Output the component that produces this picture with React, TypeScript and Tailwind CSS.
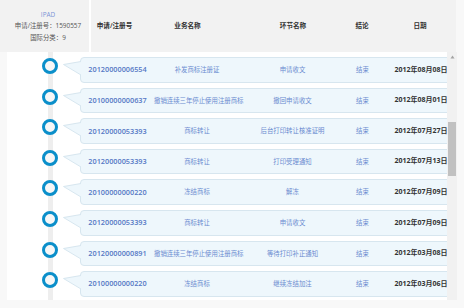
import React from "react";

const rows = [
  ["20120000006554", "补发商标注册证", "申请收文", "结束", "2012年08月08日"],
  ["20100000000637", "撤销连续三年停止使用注册商标", "撤回申请收文", "结束", "2012年08月01日"],
  ["20120000053393", "商标转让", "后台打印转让核准证明", "结束", "2012年07月27日"],
  ["20120000053393", "商标转让", "打印受理通知", "结束", "2012年07月13日"],
  ["20100000000220", "冻结商标", "解冻", "结束", "2012年07月09日"],
  ["20120000053393", "商标转让", "申请收文", "结束", "2012年07月09日"],
  ["20120000000891", "撤销连续三年停止使用注册商标", "等待打印补正通知", "结束", "2012年03月08日"],
  ["20100000000220", "冻结商标", "继续冻结加注", "结束", "2012年03月06日"],
];

const font = { fontFamily: "'Open Sans','Noto Sans CJK SC',sans-serif" };

function Circle() {
  return (
    <div className="w-[56px] shrink-0 pl-[35px] pt-[1px]">
      <div className="h-[16px] w-[16px] rounded-full border-[3px] border-[#0b8fca] bg-[#f7f7f7]" />
    </div>
  );
}

function Row({ r }: { r: string[] }) {
  return (
    <div className="flex h-[25.6px] shrink-0 items-start">
      <Circle />
      <svg width="18" height="26" viewBox="0 0 18 26" className="relative z-10 -mr-[1px] shrink-0">
        <polygon points="18,4.5 0.5,7.5 18,18" fill="#eef7fc" />
        <polyline points="18,4.5 0.5,7.5 18,18" fill="none" stroke="#d7e6ef" strokeWidth="1" />
      </svg>
      <div className="flex h-[25.6px] w-[392px] shrink-0 items-center rounded-[4px] border border-[#d7e6ef] bg-[#eef7fc]">
        <div className="w-[73px] shrink-0 text-center text-[7.3px] font-semibold text-[#5577c5]">{r[0]}</div>
        <div className="w-[86px] shrink-0 whitespace-nowrap text-center text-[6.4px] text-[#6a8bd0]">{r[1]}</div>
        <div className="w-[105px] shrink-0 whitespace-nowrap text-center text-[6.4px] text-[#6a8bd0]">{r[2]}</div>
        <div className="w-[35px] shrink-0 text-center text-[6.4px] text-[#6a8bd0]">{r[3]}</div>
        <div className="w-[82px] shrink-0 whitespace-nowrap text-center text-[7px] font-bold text-[#333]">{r[4]}</div>
      </div>
    </div>
  );
}

export default function App() {
  return (
    <div className="h-[308px] w-[464px] overflow-hidden bg-[#f8f8f8]" style={font}>
      <div className="flex h-[52px] w-[456px] bg-[#f2f2f2]">
        <div className="flex w-[91px] shrink-0 flex-col items-center justify-center border-r-2 border-white pl-[7px] text-[6.4px] leading-[11.5px] text-[#555]">
          <div className="text-[#7b93d6]">IPAD</div>
          <div>申请/注册号：1590557</div>
          <div>国际分类：9</div>
        </div>
        <div className="flex items-center whitespace-nowrap text-[6.6px] font-semibold text-[#333]">
          <div className="w-[47px] shrink-0 text-center">申请/注册号</div>
          <div className="w-[99px] shrink-0 text-center">业务名称</div>
          <div className="w-[112px] shrink-0 text-center">环节名称</div>
          <div className="w-[26px] shrink-0 text-center">结论</div>
          <div className="w-[90px] shrink-0 text-center">日期</div>
        </div>
      </div>
      <div className="flex h-[248px]">
        <div className="w-[7px] shrink-0" />
        <div className="flex h-[248px] w-[440px] shrink-0 flex-col gap-[5px] overflow-hidden bg-white bg-[linear-gradient(to_right,transparent_41px,#eeeeee_41px,#eeeeee_46px,transparent_46px)] pt-[5px]">
          {rows.map((r, i) => (
            <Row key={i} r={r} />
          ))}
          <div className="flex h-[25.6px] shrink-0 items-start">
            <Circle />
          </div>
        </div>
        <div className="flex w-[10px] shrink-0 flex-col items-center bg-[#f1f1f1] pt-[3px]">
          <svg width="5" height="4" viewBox="0 0 5 4">
            <polygon points="2.5,0.5 4.5,3.5 0.5,3.5" fill="#a3a3a3" />
          </svg>
          <div className="mt-[63px] h-[54px] w-[8px] bg-[#c1c1c1]" />
        </div>
      </div>
    </div>
  );
}
